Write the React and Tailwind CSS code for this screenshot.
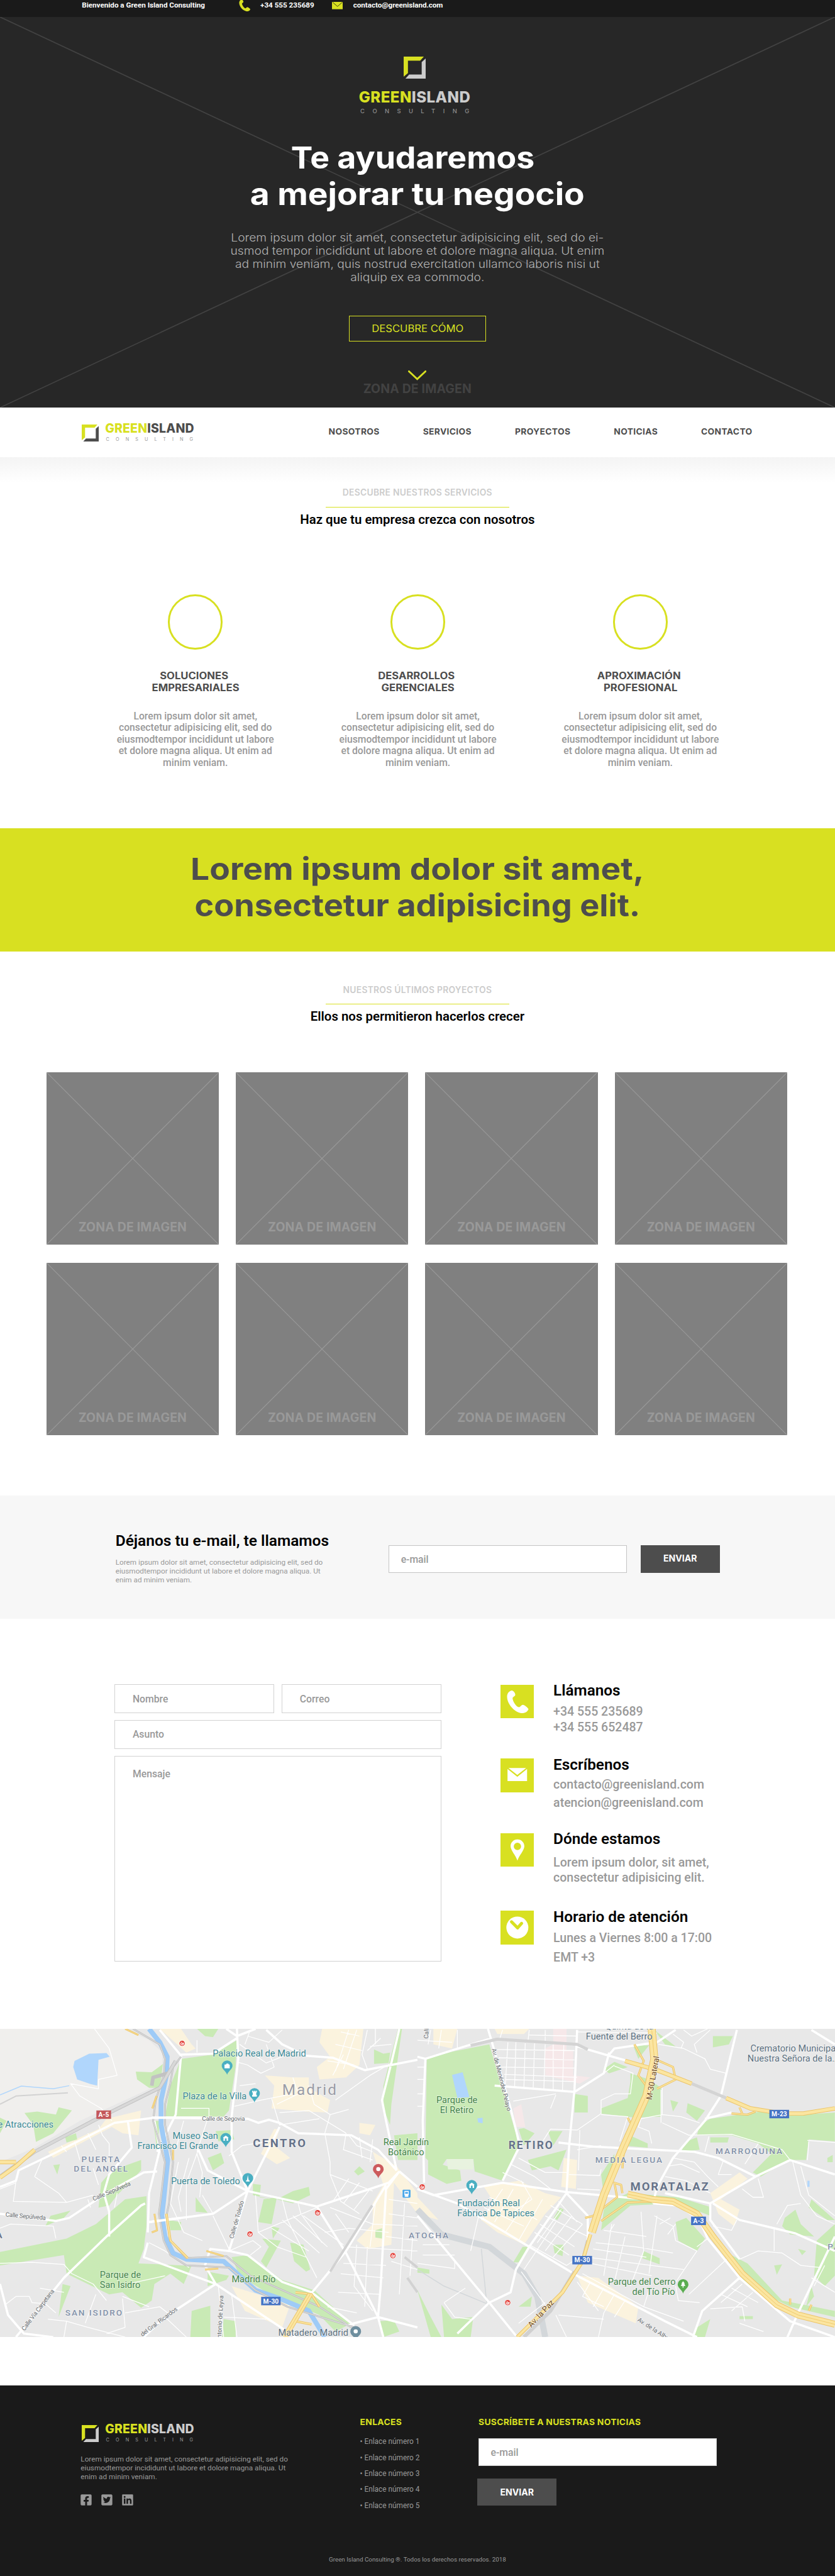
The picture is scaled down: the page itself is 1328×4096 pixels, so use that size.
import React from "react";
import { FaFacebookSquare, FaTwitterSquare, FaLinkedin } from "react-icons/fa";

const LIME = "#d8e021";

/* ---------- brand ---------- */

function LogoMark({ className, dark = false }) {
  return (
    <svg viewBox="0 0 36 36" className={className} aria-hidden="true">
      <path d="M0 0H33L27 6.7H7V27L0 33Z" fill={LIME} />
      <path d="M36 3V36H3L9 29.3H29.5V9Z" fill={dark ? "#4d4d4d" : "#cccccc"} />
    </svg>
  );
}

function LogoRow({ dark = false }) {
  return (
    <div className="flex gap-[10px]">
      <LogoMark dark={dark} className="mt-[3px] h-[28px] w-[28px]" />
      <div className="font-['Inter',sans-serif]">
        <div className={"text-[20px] leading-[20px] font-extrabold tracking-[0.21px] whitespace-nowrap " + (dark ? "text-[#4d4d4d]" : "text-[#cccccc]")}>
          <span className="text-[#d8e021]">GREEN</span>ISLAND
        </div>
        <div className="mt-[4.2px] text-[7.5px] leading-[8px] tracking-[10.4px] pl-[1.5px] whitespace-nowrap text-[#999999] -mr-[10px]">CONSULTING</div>
      </div>
    </div>
  );
}

/* ---------- icons drawn on a 55px square ---------- */

const PHONE =
  "M18.5 9.3C13 10.5 10.6 15 10.8 20C11.3 32 24 46.5 36.5 46.3C41 46 45 43 45.8 39.6C44 36.5 39.5 33 36.5 32.6C33.5 33 32.5 36.5 30 36.6C26 36 20 27 19.8 22C20 19.5 24 19 24.2 16.3C24 13 21.5 10 18.5 9.3Z";

function ContactIcon({ kind }) {
  return (
    <svg viewBox="0 0 55 55" className="h-[55px] w-[55px] shrink-0 bg-[#d8e021]" aria-hidden="true">
      {kind === "phone" && <path d={PHONE} fill="#fff" />}
      {kind === "mail" && (
        <g fill="#fff">
          <path d="M13 15.7H42L27.5 27Z" />
          <path d="M11.5 17.2L27.5 30L43.5 17.2V37H11.5Z" />
        </g>
      )}
      {kind === "pin" && (
        <path fill="#fff" fillRule="evenodd" d="M27.7 10C21.5 10 16.5 15 16.5 21C16.5 28 25 36 27.7 44.8C30.4 36 39 28 39 21C39 15 34 10 27.7 10ZM27.7 15.5A6 6 0 1 1 27.7 27.5A6 6 0 1 1 27.7 15.5Z" />
      )}
      {kind === "clock" && (
        <g>
          <circle cx="27.6" cy="27.7" r="18" fill="#fff" />
          <path d="M18 18.3L28 28.3L34.6 20.8" fill="none" stroke={LIME} strokeWidth="5" strokeLinecap="round" strokeLinejoin="round" />
        </g>
      )}
    </svg>
  );
}

/* ---------- header ---------- */

function TopBar() {
  return (
    <div className="flex h-[28px] bg-[#1a1a1a] pl-[134px] font-['Roboto',sans-serif] text-[12px] leading-[18px] font-bold text-white whitespace-nowrap">
      <div className="w-[257px]">Bienvenido a Green Island Consulting</div>
      <svg viewBox="10 8.5 36.5 38.5" className="h-[20px] w-[19px] -mt-px mr-[16px]" aria-hidden="true">
        <path d={PHONE} fill={LIME} />
      </svg>
      <div className="w-[117px]">+34 555 235689</div>
      <svg viewBox="0 0 18 12" className="mt-[3px] mr-[17px] h-[12px] w-[18px]" aria-hidden="true">
        <path d="M0 0H18V12H0Z" fill={LIME} />
        <path d="M1 0.5L9 7.5L17 0.5" fill="none" stroke="#3c3f10" strokeWidth="1" />
      </svg>
      <div className="tracking-[-0.05px]">contacto@greenisland.com</div>
    </div>
  );
}

function Hero() {
  return (
    <section className="relative h-[639px] bg-[#272727]">
      <svg className="absolute inset-0 h-full w-full" viewBox="0 0 1366 639" preserveAspectRatio="none" aria-hidden="true">
        <path d="M0 0L1366 639M1366 0L0 639" stroke="#424242" strokeWidth="1.8" />
      </svg>
      <div className="relative flex flex-col items-center pt-[65px] font-['Inter',sans-serif]">
        <div className="mr-[9px] flex flex-col items-center">
          <LogoMark className="h-[36px] w-[36px]" />
          <div className="mt-[17.7px] text-[24.8px] leading-[24px] font-extrabold tracking-[0.45px] text-[#cccccc]">
            <span className="text-[#d8e021]">GREEN</span>ISLAND
          </div>
          <div className="mt-[4.8px] -mr-[13px] text-[9.6px] leading-[12px] font-medium tracking-[12.8px] text-[#8f8f8f]">CONSULTING</div>
        </div>
        <h1 className="mt-[40.7px] text-center text-[50px] leading-[59.6px] font-bold text-white">
          <span className="mr-[15px] block scale-x-[1.065]">Te ayudaremos</span>
          <span className="block scale-x-[1.096]">a mejorar tu negocio</span>
        </h1>
        <p className="mt-[30px] scale-x-[1.094] text-center text-[18.1px] leading-[21.67px] font-light text-[#b3b3b3] whitespace-nowrap">
          Lorem ipsum dolor sit amet, consectetur adipisicing elit, sed do ei-<br />
          usmod tempor incididunt ut labore et dolore magna aliqua. Ut enim<br />
          ad minim veniam, quis nostrud exercitation ullamco laboris nisi ut<br />
          aliquip ex ea commodo.
        </p>
        <a className="mt-[52px] flex h-[43px] w-[225px] items-center justify-center border border-[#d8e021] pt-px text-[16px] leading-[20px] text-[#d8e021]">
          <span className="scale-x-[1.07]">DESCUBRE CÓMO</span>
        </a>
        <svg viewBox="0 0 30 16" className="mt-[47px] h-[16px] w-[30px]" aria-hidden="true">
          <path d="M1.5 1.5L15 14.2L28.5 1.5" fill="none" stroke={LIME} strokeWidth="3" strokeLinecap="round" />
        </svg>
        <div className="mt-[4.7px] text-[20px] leading-[20px] font-bold tracking-[0.17px] text-[#424242]">ZONA DE IMAGEN</div>
      </div>
    </section>
  );
}

function Nav() {
  return (
    <nav className="flex h-[81px] justify-between bg-white pt-[24px] pr-[135px] pl-[134px]">
      <LogoRow dark />
      <ul className="flex gap-[71px] pt-[6px] font-['Inter',sans-serif] text-[14.2px] leading-[20px] font-bold tracking-[0.36px] text-[#4d4d4d]">
        {["NOSOTROS", "SERVICIOS", "PROYECTOS", "NOTICIAS", "CONTACTO"].map((t) => (
          <li key={t}>{t}</li>
        ))}
      </ul>
    </nav>
  );
}

function SectionTitle({ kicker, children }) {
  return (
    <div className="flex flex-col items-center">
      <div className="font-['Inter',sans-serif] text-[14.2px] leading-[20px] font-semibold tracking-[0.3px] text-[#cccccc]">{kicker}</div>
      <div className="mt-[12.2px] h-[1.2px] w-[300px] bg-[#d8e021]" />
      <h2 className="mt-[8.6px] font-['Roboto',sans-serif] text-[21px] leading-[24px] font-semibold text-black">{children}</h2>
    </div>
  );
}

/* ---------- services ---------- */

const SERVICES = [
  ["SOLUCIONES", "EMPRESARIALES"],
  ["DESARROLLOS", "GERENCIALES"],
  ["APROXIMACIÓN", "PROFESIONAL"],
];

function Services() {
  return (
    <section className="h-[606.7px] bg-[linear-gradient(#f4f4f4,#ffffff_42px)] pt-[48.8px]">
      <SectionTitle kicker="DESCUBRE NUESTROS SERVICIOS">Haz que tu empresa crezca con nosotros</SectionTitle>
      <div className="mt-[110px] ml-[137.7px] grid w-[1092px] grid-cols-3">
        {SERVICES.map(([a, b]) => (
          <div key={a} className="flex flex-col items-center text-center">
            <div className="h-[90px] w-[90px] rounded-full border-[3.2px] border-[#d8e021]" />
            <h3 className="mt-[33.8px] font-['Inter',sans-serif] text-[15.8px] leading-[19.4px] font-bold text-[#4d4d4d]">
              <span className="mr-[5px] block scale-x-[1.085]">{a}</span>
              <span className="block scale-x-[1.085]">{b}</span>
            </h3>
            <p className="mt-[27px] font-['Roboto',sans-serif] text-[16.15px] leading-[19.1px] font-medium text-[#999999] whitespace-nowrap">
              Lorem ipsum dolor sit amet,<br />
              consectetur adipisicing elit, sed do<br />
              eiusmodtempor incididunt ut labore<br />
              et dolore magna aliqua. Ut enim ad<br />
              minim veniam.
            </p>
          </div>
        ))}
      </div>
    </section>
  );
}

function Quote() {
  return (
    <section className="h-[202.3px] bg-[#d8e021] pt-[37.4px] text-center font-['Inter',sans-serif] text-[50px] leading-[60px] font-bold text-[#4d4d4d]">
      <div className="scale-x-[1.097]">Lorem ipsum dolor sit amet,</div>
      <div className="scale-x-[1.076]">consectetur adipisicing elit.</div>
    </section>
  );
}

/* ---------- projects ---------- */

function Projects() {
  return (
    <section className="h-[890px] bg-white pt-[52.8px]">
      <SectionTitle kicker="NUESTROS ÚLTIMOS PROYECTOS">Ellos nos permitieron hacerlos crecer</SectionTitle>
      <div className="mt-[78.2px] ml-[76px] grid w-[1212px] grid-cols-4 gap-x-[28px] gap-y-[30px]">
        {Array.from({ length: 8 }, (_, i) => (
          <div key={i} className="relative flex h-[282px] items-end justify-center bg-[#808080] pb-[17.8px]">
            <svg className="absolute inset-0 h-full w-full" viewBox="0 0 282 282" aria-hidden="true">
              <path d="M0 0L282 282M282 0L0 282" stroke="#999999" strokeWidth="1.2" />
            </svg>
            <span className="relative font-['Inter',sans-serif] text-[20px] leading-[20px] font-bold tracking-[0.17px] text-[#999999]">ZONA DE IMAGEN</span>
          </div>
        ))}
      </div>
    </section>
  );
}

/* ---------- newsletter ---------- */

function Newsletter() {
  return (
    <section className="flex h-[201px] bg-[#f7f7f7] pl-[189px] font-['Roboto',sans-serif]">
      <div className="w-[447px] pt-[58.3px]">
        <h2 className="text-[25.2px] leading-[30px] font-semibold text-black">Déjanos tu e-mail, te llamamos</h2>
        <p className="mt-[12.7px] text-[12.1px] leading-[14.4px] text-[#999999]">
          Lorem ipsum dolor sit amet, consectetur adipisicing elit, sed do<br />
          eiusmodtempor incididunt ut labore et dolore magna aliqua. Ut<br />
          enim ad minim veniam.
        </p>
      </div>
      <div className="mt-[81.3px] flex h-[45px] w-[390px] items-center border border-[#c4c4c4] bg-white pt-[2px] pl-[19px] text-[16.2px] font-medium text-[#999999]">e-mail</div>
      <div className="mt-[81.3px] ml-[22px] flex h-[45px] w-[130px] items-center justify-center bg-[#4d4d4d] pb-[3px] font-['Inter',sans-serif] text-[14.5px] font-bold text-white">ENVIAR</div>
    </section>
  );
}

/* ---------- contact ---------- */

const CONTACTS = [
  { kind: "phone", title: "Llámanos", lines: ["+34 555 235689", "+34 555 652487"], box: "h-[121px]", body: "mt-[7.8px] leading-[26.3px]" },
  { kind: "mail", title: "Escríbenos", lines: ["contacto@greenisland.com", "atencion@greenisland.com"], box: "h-[122px]", body: "mt-[4.4px] leading-[30px]" },
  { kind: "pin", title: "Dónde estamos", lines: ["Lorem ipsum dolor, sit amet,", "consectetur adipisicing elit."], box: "h-[127px]", body: "mt-[13.4px] leading-[24px]" },
  { kind: "clock", title: "Horario de atención", lines: ["Lunes a Viernes 8:00 a 17:00", "EMT +3"], box: "h-[127px]", body: "mt-[5.4px] leading-[32px]" },
];

function Contact() {
  return (
    <section className="flex h-[671px] bg-white pt-[107px] pl-[187.5px] font-['Roboto',sans-serif]">
      <div className="flex w-[535px] flex-col gap-[11.5px] text-[16.2px] font-medium text-[#999999]">
        <div className="flex gap-[12px]">
          <div className="flex h-[47.5px] flex-1 items-center border border-[#d2d2d2] pt-px pl-[28.5px]">Nombre</div>
          <div className="flex h-[47.5px] flex-1 items-center border border-[#d2d2d2] pt-px pl-[28.5px]">Correo</div>
        </div>
        <div className="flex h-[47.5px] items-center border border-[#d2d2d2] pl-[28.5px]">Asunto</div>
        <div className="h-[336px] border border-[#d2d2d2] pt-[17.5px] pl-[28.5px] leading-[22px]">Mensaje</div>
      </div>
      <div className="ml-[96px] pt-px">
        {CONTACTS.map((c) => (
          <div key={c.kind} className={"flex " + c.box}>
            <ContactIcon kind={c.kind} />
            <div className="-mt-[5px] ml-[32px]">
              <h3 className="text-[25px] leading-[28px] font-semibold text-black">{c.title}</h3>
              <p className={"text-[20.1px] font-medium text-[#999999] whitespace-nowrap " + c.body}>
                {c.lines[0]}<br />{c.lines[1]}
              </p>
            </div>
          </div>
        ))}
      </div>
    </section>
  );
}

/* ---------- map ----------
   Each half of the city is drawn in its own 1568-unit grid. */

const KX = 0.4356;
const KY = 0.338;
const GRID = `scale(${KX} ${KY}) translate(0 -55)`;

const WEST = {
  pale: "M0 55H470L560 110L610 170V260L570 340L300 500L130 630L0 700Z",
  beige:
    "M600 55H680L720 130L735 150L700 170ZM1210 55H1365L1350 230L1300 290L1200 300L1190 240L1240 190L1200 120ZM995 280L1100 290H1160V340L1240 400L1230 460L1150 455L1020 440L1030 330ZM1030 540H1050L1030 620L1090 680L1040 710L980 660ZM180 650L370 540L400 490L530 450L520 570L460 560L420 530L200 680ZM1350 510L1410 520L1390 570L1350 560ZM1400 650L1490 720L1568 850V950L1480 800L1470 1100L1380 1120L1340 1080L1400 1000V900L1440 810ZM870 1300L1090 1390L1060 1500L920 1420ZM1130 350L1210 380L1200 440L1140 420Z",
  green:
    "M680 200L800 180L890 110L885 240L860 450L840 480H620L640 330ZM510 262L570 265L612 225L600 340H560L515 300ZM740 55H820L800 95L770 90ZM92 462L140 455L210 470L220 435L270 450L200 560L135 602L125 520ZM245 580L285 560L290 590L250 605ZM0 485L25 500L0 560ZM810 550L870 545L880 590L820 600ZM780 680L830 655L842 705L800 740ZM0 1135L250 1070L360 1000L470 880L550 865V1010L540 1120L520 1190L690 1200H720L690 1290L640 1240L580 1290L570 1370L530 1405L460 1330L410 1340L250 1240L240 1150L0 1200ZM380 800L420 740L530 690V740L440 860L410 910L370 920ZM235 1290L265 1300L220 1450ZM735 870L780 945L735 940ZM950 805L980 810L975 870L1020 880L950 860ZM990 880L1040 870L1020 1000L970 990ZM1100 840L1160 820L1165 860L1100 900L1040 880ZM985 1070L1055 1080L1000 1210L980 1180L1010 1110ZM1020 1010L1050 1020L1025 1070ZM1090 1090L1140 1100L1165 1220L1150 1230L1105 1180ZM870 1160L930 1150L1060 1270L1180 1320L1320 1480L1260 1520L1200 1440L1000 1330L900 1250ZM780 1230L860 1250L850 1270L780 1300ZM720 1420L790 1395V1547H715ZM840 1460L885 1470V1547H835ZM1405 155L1440 175L1465 170L1460 220L1405 225ZM1480 570L1568 560V690H1495ZM1350 720L1370 745L1345 765L1330 745ZM1495 55H1510L1470 420L1465 520L1440 440V330ZM1425 1470L1480 1465L1500 1520L1440 1547ZM1410 1030L1435 1020V1070L1410 1065ZM575 500H600L590 640ZM635 980L680 990V1030H640ZM200 715L225 710L215 760ZM190 960L265 935L240 970L170 1010Z",
  water: "M335 175L400 172L412 190L370 205L365 330L340 322L290 300L275 240L280 210Z",
  minor:
    "M355 55L410 150L440 280L370 300L370 345L265 320L300 380L380 440L420 500M370 520L385 570L410 610V700M330 560L360 640M280 600L300 690M230 620L250 650M60 790L50 890L250 895L350 860M130 770L160 680M130 770L220 850L250 895M0 830L60 800M350 730L370 810M330 880L340 920M0 1020L40 1000L120 1005L200 1010L210 1070M440 850L430 920M0 1190L120 1185L240 1195L270 1240L350 1290L400 1370M150 1310L240 1330M20 1390L60 1350H110L120 1380L170 1385L210 1430M180 1460L250 1470L240 1547M250 1470L330 1500L470 1547M360 1340L320 1480M460 1360L470 1500L400 1530M680 440H785V480M690 500L660 640M780 490L740 650M670 700L640 900L690 1040L760 1080M710 680L670 870L680 940M745 640L700 800L700 980M760 860L800 950M740 660L760 750L750 870M860 670L910 620L1050 590M890 215L930 230L980 270L1030 240L1000 130M740 110V170M900 130L1000 220L1080 180M930 90L1010 120L1060 60M940 60L920 130M900 330L960 320M880 430L980 400L1100 370M1020 390L1050 520L1200 490M1050 460L1160 450L1300 560M1100 290L1120 370L1040 420M1160 330L1180 420L1240 470L1220 560M1240 470L1310 445M1260 400L1390 280L1470 220M1290 180L1250 280M1280 70L1350 90M1260 130L1360 160M1230 210L1330 230M1310 60L1260 260M1340 60L1290 250M1380 60L1360 180L1380 250M1430 100L1380 160M1390 140L1470 130M1410 55V130M1300 560L1290 640L1400 690M1240 760L1400 840M1240 760L1280 890L1350 950M1310 780L1250 890M1350 800L1290 900M1390 830L1330 930M1310 570L1340 620L1400 650M1350 580L1360 680M1400 590L1390 700M1220 560L1240 700L1240 760M960 860L970 1040L1190 920M970 1040L1040 1110L1150 1160M1060 880L1080 980L1190 1260M1120 900L1130 950L1210 1090M1060 980L1200 1140M1100 960L1230 1110M1020 1020L1160 1130M1140 960L1290 1100M1240 920L1400 1000L1568 1010M1260 950L1310 1040M1220 1040L1310 1020L1460 1040M1300 1110L1568 1130M1290 1190L1450 1200M1280 1240L1440 1260M1270 1330L1430 1340M1340 1100L1330 1300L1400 1420M1380 1110L1370 1400M1410 900L1390 1110M1520 900L1500 1340M1550 1060L1540 1250M1470 1180L1568 1220M860 1130L950 1080L980 1110L940 1150M800 960L830 1040L860 1120M820 1300L840 1547M870 1340L890 1547M840 1450L1000 1460M620 1450L700 1547M560 1090L620 1130L710 1210M480 1290L620 1250M460 1350L560 1400M470 1430L600 1400L640 1440M1230 1400L1340 1430M1460 880L1568 900M1460 950L1568 970M1450 1060L1568 1080",
  major:
    "M0 820L60 790L70 740L200 660L430 510L580 485L930 490L970 510L1010 495L1050 510L1120 560L1320 570L1420 640L1490 740M600 60L680 185L660 470L590 650M680 180L800 175L890 100M1150 185L1250 195L1370 255L1568 205M890 55L895 200L870 480V650L930 840L860 1130M960 55L890 90L850 55M1000 60L1060 130L1150 185M930 840L1050 530M930 840L1190 915L1460 800L1500 745M745 640L780 740L930 840L800 950L560 990M1190 915L1300 1140L1420 1450L1440 1547M1490 740L1450 500L1435 400L1470 220L1500 55M1500 745L1568 820M1500 745L1450 830L1430 1300L1420 1450M1450 810L1300 1130L1160 1350M0 950L210 985L260 970L400 850L540 750L590 745M545 900L530 910L400 1060L240 1260L90 1500L60 1547M580 500L600 640L560 850L555 1040M555 1090L540 1160L810 1290L620 1450L540 1547M810 1290L1110 1547M930 1150L860 1130L790 1120L770 1200L810 1290M930 1150L1060 1280L1170 1330L1330 1490M480 500L495 630L410 760L390 850L410 940V1060M0 1290L30 1440L90 1530L200 1547M1420 1450L1300 1490M1420 1450L1568 1500",
};

const EAST = {
  pink: "M510 55H560V160H585V280L650 290L610 320L480 280V150L510 130ZM360 440L390 420L405 530H370Z",
  beige:
    "M60 55H150L130 150L60 130ZM290 55H420L400 80H300ZM250 820L380 790L480 850L540 870L480 950L400 1100L370 1080L300 1040L240 980L290 900ZM550 680L600 690L595 830L540 820ZM1100 850L1210 750L1240 780L1140 880L1210 930L1190 1010L1130 950ZM600 1250L680 1260L830 1400L820 1480L640 1380ZM0 870L80 980L0 950Z",
  green:
    "M35 200L130 165L270 130L300 260L370 560L380 640L320 790L215 745L210 685H110L80 740L30 680ZM40 690L160 740L165 790L110 805L40 760ZM590 370L640 380V460H590ZM800 270L870 300L915 340V480L820 485L690 465V440L790 390L800 310ZM700 250L740 215L790 240L720 270ZM810 135H870L830 200ZM890 60L970 140L930 130ZM1110 90H1185L1170 130L1110 145ZM950 400L980 410L960 455ZM1015 415L1080 450L1050 500L1010 460ZM1100 490L1320 450L1400 475L1568 460V600L1470 590L1460 690H1390L1290 770L1260 750L1330 660L1280 610L1180 570H1050L1060 520ZM1010 600L1050 580L1060 640L990 650ZM1100 580H1170L1165 605H1100ZM490 550H545L510 620ZM415 690L560 640L530 740L500 720L430 740ZM400 535L440 560L400 620L380 540ZM690 760L740 660V720L700 860ZM790 850L980 870L1095 915L1100 960L980 900L800 910L690 1030L700 930L730 890ZM970 990L1010 970L1080 1070L1050 1130L980 1080ZM850 1130L910 1165V1195L845 1165ZM510 1100H550L545 1155L515 1140ZM535 920L550 930L525 980L512 970ZM395 1110H415L380 1185H360ZM1150 1130L1240 1190L1370 1370L1568 1420V1450L1400 1400L1240 1300ZM1380 970L1420 930L1440 1000L1490 1060L1400 1050L1370 1010ZM1568 1000L1500 1080L1490 1250L1530 1300L1568 1250ZM1430 1120L1460 1130L1445 1150ZM1480 1300L1490 1350L1460 1400ZM0 1320L50 1450L90 1547H50ZM90 1390L130 1460L210 1450L200 1547H100ZM1050 1500L1100 1460L1080 1547H1030ZM380 1400L430 1350L425 1400ZM1340 1200L1370 1195L1350 1245ZM1480 880L1568 980L1540 980L1470 920ZM0 1210L45 1220V1240L0 1235ZM1540 680L1560 665V700H1540ZM780 560L865 610V630L770 620ZM1210 1445H1260V1460H1210Z",
  pale: "M110 685H210V735H115Z",
  water: "M130 278L170 265L195 385L150 390ZM225 488L245 485V512L228 508ZM1465 790H1473V820H1465Z",
  minor:
    "M340 120L330 330M370 120L365 335M405 125L400 340M440 125L435 340M480 130L475 345M510 130V350M550 130L545 350M300 155L590 160M305 195L590 205M315 240L590 245M325 275L600 290M330 300L590 310M320 60L310 100M420 60L415 120M480 60V125M600 90L420 85M600 70L900 75M360 405L520 370M520 375L500 440M500 540L600 545L690 465L690 400L740 370M500 540L470 600M610 545L605 740M600 640L690 620M570 760L685 765L690 735M380 680L480 750L560 750M350 710L440 770L500 830M320 750L400 800M600 830L685 835M690 470L790 480L760 600M740 235L810 270L800 370L740 370M700 270L740 230M905 130L1000 150L1080 200L1100 250L1160 270M960 80L1000 120L990 150M1000 60L1030 90L1090 55M1100 60L1040 130L1050 170M920 340V470L840 490L830 530L870 550L880 610M920 470L990 480L1060 510M915 350V510M920 510L1020 570L1180 565L1370 640L1400 690M1095 575L1080 650M1280 610L1230 710M940 720L990 710L1060 750M960 680L1040 700L1090 770L1130 820M930 770L1010 790L1100 850M1150 690L1130 760L1180 760M1465 595L1570 605M1470 600L1465 690M1410 700L1440 860L1500 960L1568 1000M1440 720L1470 860L1568 960M1280 780L1300 870L1260 870L1220 830M1340 1020V1130M1440 900L1390 910L1350 1000M1210 1170L1280 1130L1370 1140L1440 1200L1510 1210M1200 980L1180 1030L1110 1010M480 960L640 1060M500 910L620 1000M530 890L600 990M460 1000L590 1110M440 1040L570 1150M420 1100L560 1200M540 930L450 1090M580 960L480 1130M620 1000L510 1160M560 1200L630 1140M390 790L430 880L350 950M320 830L240 980M360 830L290 990M420 870L330 1040M470 880L380 1080M270 870L400 940L450 980M250 920L400 1010M230 960L200 1130M640 1160L1000 1220M660 1120L860 1160M650 1190L880 1250M670 1090L820 1110L960 1140M700 1030L860 1060M730 1000L700 1250M780 1060L740 1280M840 940L850 1130L800 1300M900 960L870 1240M740 1000L720 1040M890 960L960 1010L970 1080L1050 1130M910 1000L950 970M940 1050L970 1000M1050 1130L960 1300M1170 1160L1020 1340M1090 1070L1050 1110M600 1280L680 1420M650 1280L620 1350L700 1400M700 1310L660 1400M740 1340L700 1430M780 1370L740 1450M620 1240L850 1400L1000 1470M870 1320L850 1400M970 1300L980 1370L1060 1380M400 1220L520 990M390 1230L480 1390M20 1100L120 1100M20 1150L140 1150M0 1190L140 1215V1180M100 1380L140 1450L200 1460M100 1380L180 1310M380 1480L480 1380M520 1440L560 1547M530 1440L700 1460M700 1430L680 1547M1100 1410L1220 1400M1220 1400L1230 1470M1140 1340L1240 1400M1180 1310L1280 1380M1220 1290L1140 1380M1260 1330L1180 1420M1480 1260L1568 1330M1530 1200L1490 1300M1210 1480L1300 1520M0 240H30M0 300H25M0 370H25M0 430H25M50 60L40 130M90 60L80 150M0 110L130 120M150 60V150",
  major:
    "M0 190L30 200L140 155L280 100M30 200L20 500L25 800M265 55L280 120L350 440L385 620L320 790M600 60L590 350L570 620L560 850M290 330L590 360L700 270L720 170M600 140L720 185L870 240M720 180L740 150L900 120L970 60M0 830L60 860L320 800L560 845L900 885M0 830L150 900L420 1110L600 1250L930 1470L1050 1547M560 850L420 1110L370 1220L350 1330L270 1380L150 1530M270 1380L370 1540M0 960L270 1380M530 605L660 625L1040 650L1130 680L1270 770L1400 690L1568 760M1270 770L1100 900M1200 60L1140 380L1080 500L960 680L900 820L885 900M1180 460L1080 490M885 900L980 910L1060 980L1090 1070L1210 1260L1400 1470L1568 1547M1100 900L930 850M1100 900V980L1210 1170M1110 900L1210 980L1340 1020L1420 1045L1568 1130M1568 1060L1430 1430L1390 1547M1210 1260L1070 1420L1035 1547M560 850L640 960V1080M1480 60L1568 130",
};

const TEAL = "#3a8996";
const PARK = "#44854a";
const ZONE = "#8190a8";
const TOWN = "#66738a";
const SLATE = "#5c7080";
const STREET = "#666a6e";
const W = 0;
const E = 683;

/* half, text, x, baseline, size, colour, tracking, rotation, weight */
const LABELS = [
  [W, "Palacio Real de Madrid", 799, 190, 15, TEAL],
  [W, "Plaza de la Villa", 686, 395, 15, TEAL],
  [W, "Museo San", 648, 588, 15, TEAL],
  [W, "Francisco El Grande", 516, 637, 15, TEAL],
  [W, "Puerta de Toledo", 642, 808, 15, TEAL],
  [W, "e Atracciones", -8, 533, 15, TEAL],
  [W, "Madrid", 1060, 375, 25, "#9a9ca6", 2.1, 0, 400],
  [W, "CENTRO", 950, 628, 19, TOWN, 2.6, 0, 700],
  [W, "PUERTA", 306, 701, 14, ZONE, 2.2, 0, 500],
  [W, "DEL ANGEL", 277, 746, 14, ZONE, 2, 0, 500],
  [W, "SAN ISIDRO", 245, 1443, 14, ZONE, 2, 0, 500],
  [W, "Calle de Segovia", 759, 500, 10, STREET, -0.2],
  [W, "Calle Sepúlveda", 352, 888, 10, STREET, -0.3, -23],
  [W, "Calle Sepúlveda", 20, 963, 10, STREET, -0.3, 5],
  [W, "Calle de Toledo", 876, 1072, 10, STREET, -0.3, -74],
  [W, "Calle Vía Carpetana", 92, 1518, 10, STREET, -0.3, -53],
  [W, "del Gral. Ricardos", 535, 1545, 10, STREET, -0.3, -37],
  [W, "Antonio de Leyva", 830, 1570, 10, STREET, 0, -87],
  [W, "Parque de", 375, 1260, 15, PARK],
  [W, "San Isidro", 375, 1308, 15, PARK],
  [W, "Madrid Río", 870, 1281, 15, PARK],
  [W, "Matadero Madrid", 1045, 1541, 15, SLATE],
  [W, "Real Jardín", 1440, 619, 15, PARK],
  [W, "Botánico", 1457, 668, 15, PARK],
  [W, "ATOCHA", 1535, 1070, 14, ZONE, 2, 0, 500],
  [W, "A", -13, 1070, 14, TOWN, 0, 0, 700],
  [E, "Quinta de la", 705, 57, 15, SLATE],
  [E, "Fuente del Berro", 633, 107, 15, SLATE],
  [E, "Crematorio Municipal", 1251, 165, 15, SLATE],
  [E, "Nuestra Señora de la…", 1240, 213, 15, SLATE],
  [E, "Parque de", 71, 415, 15, PARK],
  [E, "El Retiro", 85, 463, 15, PARK],
  [E, "RETIRO", 342, 635, 18, TOWN, 2, 0, 700],
  [E, "MEDIA LEGUA", 668, 704, 14, ZONE, 2, 0, 500],
  [E, "MORATALAZ", 800, 836, 19, TOWN, 2, 0, 700],
  [E, "MARROQUINA", 1120, 662, 14, ZONE, 2, 0, 500],
  [E, "Fundación Real", 150, 913, 15, TEAL],
  [E, "Fábrica De Tapices", 150, 962, 15, TEAL],
  [E, "Parque del Cerro", 715, 1295, 15, PARK],
  [E, "del Tío Pío", 807, 1343, 15, PARK],
  [E, "PA", 1541, 1123, 14, ZONE, 2, 0, 500],
  [E, "M-30 Lateral", 880, 400, 13, "#6f4a22", 0, -80],
  [E, "Av. la Paz", 428, 1502, 13, "#6f4a22", 0, -47],
  [E, "Av. de Menéndez Pelayo", 279, 152, 10, STREET, -0.1, 76],
  [E, "Av. de la Albufera", 825, 1468, 10, STREET, 0, 33],
  [E, "Calle", 40, 103, 10, STREET, 0, -86],
];

const BADGES = [
  [W, "A-5", 362, 450, 55, "#c4585b"],
  [W, "M-30", 981, 1352, 73, "#4573c4"],
  [E, "M-23", 1322, 447, 74, "#4573c4"],
  [E, "A-3", 1028, 964, 56, "#4573c4"],
  [E, "M-30", 582, 1154, 74, "#4573c4"],
];

const PINS = [
  [W, 853, 236, "#4aafc2", "camera"],
  [W, 956, 370, "#4aafc2", "tower"],
  [W, 848, 587, "#4aafc2", "house"],
  [W, 931, 781, "#4aafc2", "spire"],
  [W, 1336, 1522, "#6f8f9f", "dot"],
  [W, 1421, 737, "#cc5b5d", "dot"],
  [E, 204, 815, "#4aafc2", "house"],
  [E, 998, 1295, "#5aad50", "tree"],
];

const GLYPHS = {
  camera: "M-4.5 -2.5H-2L-1 -4H2L3 -2.5H4.5V4H-4.5Z",
  tower: "M-4 -5H-2V-3.5H-1V-5H1V-3.5H2V-5H4V-2H3V2H4V5H-4V2H-3V-2H-4Z",
  house: "M0 -5L5 -1.5H4V4H1.5V0H-1.5V4H-4V-1.5H-5Z",
  spire: "M0 -6L1.5 3H3V5H-3V3H-1.5Z",
  tree: "M0 -6L3 -2H1.8L4 2H0.8V5H-0.8V2H-4L-1.8 -2H-3Z",
};

const METRO = [[W, 684, 125], [W, 1193, 945], [W, 939, 1048], [W, 1476, 1152], [E, 18, 820], [E, 339, 1380]];

const at = (half, x, y) => `translate(${(half + x * KX).toFixed(1)} ${((y - 55) * KY).toFixed(1)})`;

function Road({ d, color, width }) {
  return <path d={d} fill="none" stroke={color} strokeWidth={width} strokeLinejoin="round" vectorEffect="non-scaling-stroke" />;
}

function Motorway({ d, width }) {
  return (
    <>
      <Road d={d} color="#ecc467" width={width} />
      <Road d={d} color="#fbe5a0" width={width - 2} />
      {width > 8 && <Road d={d} color="#efca70" width={1} />}
    </>
  );
}

function CityMap() {
  return (
    <svg viewBox="0 0 1366 504" className="block h-[504px] w-[1366px] overflow-hidden bg-[#e8e8e8]" role="img">
      <g transform={GRID}>
        <path d={WEST.pale} fill="#f0efed" />
        <path d={WEST.beige} fill="#fbf3de" />
        <path d={WEST.green} fill="#c9eab5" />
        <path d={WEST.water} fill="#b0d6fc" />
        <Road d="M0 375L80 332L200 345L260 330" color="#b0d6fc" width={1.5} />
        <Road d="M0 420L60 380L255 365" color="#d2d2d2" width={2} />
        <Road d={WEST.minor} color="#ffffff" width={1.3} />
        <Road d={WEST.major} color="#ffffff" width={3.6} />
        <Road d="M560 55L600 120L628 190L625 280L605 400V520L630 690L615 880L608 960L620 1060L650 1140L700 1170L840 1180L900 1250L960 1320L1050 1360L1160 1420L1220 1547" color="#9ecbf7" width={8} />
        <Road d="M500 55L600 130L620 200L615 280L585 400L575 500L620 700L605 870L597 950L615 1080L640 1150L700 1200L860 1210L960 1320L1080 1400L1330 1500M680 190L650 240L640 320L620 420V520L650 700L635 900L625 960L640 1080L700 1165L850 1155L940 1250L1200 1400L1320 1500" color="#bcbcbc" width={3} />
        <Road d="M500 55L600 130L620 200L615 280L585 400L575 500L620 700L605 870L597 950L615 1080L640 1150L700 1200L860 1210L960 1320L1080 1400L1330 1500M680 190L650 240L640 320L620 420V520L650 700L635 900L625 960L640 1080L700 1165L850 1155L940 1250L1200 1400L1320 1500" color="#d8d8d8" width={1.6} />
        <Road d="M570 485H760M560 990L680 970" color="#ffffff" width={4} />
        <Road d="M0 770L130 650L350 500L600 340L660 210M570 330L575 290L630 270" color="#c2c2c2" width={6} />
        <Road d="M0 770L130 650L350 500L600 340L660 210" color="#d8d8d8" width={4} />
        <Road d="M1398 910L1240 1230M1520 1160L1568 1210M1530 1260L1568 1330" color="#d2d2d2" width={4} />
        <Motorway d="M0 775L60 720L130 640M0 700H60" width={7} />
        <Motorway d="M470 55L520 85M588 380L572 440M650 640V690M580 950L590 1030L570 1040M775 1130L840 1155M770 1220L820 1215" width={3} />
        <Motorway d="M625 950L640 1080L705 1165M1110 1330L1170 1340L1200 1400M1110 1470L1170 1485" width={4} />
        <Motorway d="M1165 1340L1070 1547" width={9} />
      </g>
      <g transform={`translate(${E} 0) ${GRID}`}>
        <path d={EAST.pink} fill="#f6e8e9" />
        <path d={EAST.beige} fill="#fbf3de" />
        <path d={EAST.green} fill="#c9eab5" />
        <path d={EAST.pale} fill="#e8f3df" />
        <path d={EAST.water} fill="#b0d6fc" />
        <Road d="M0 930L90 1050L270 1110L400 1240L450 1350L480 1547" color="#d3d7da" width={10} />
        <Road d="M0 1220L100 1300L270 1390M240 1120L260 1380" color="#d3d7da" width={1.5} />
        <Road d={EAST.minor} color="#ffffff" width={1.3} />
        <Road d={EAST.major} color="#ffffff" width={3.6} />
        <Road d="M200 135L300 105L600 130L640 155M1030 320L1160 390" color="#d4d4d4" width={5} />
        <Road d="M590 1230L500 1420L400 1547M640 1080L620 1180" color="#d0d0d0" width={6} />
        <Motorway d="M815 130L850 210L830 280L870 350M890 200L960 240L970 300L900 345M910 890L790 895L690 985M630 970L660 960L750 870L740 800L765 810L770 850M1180 465L1240 470L1270 455M1210 435L1220 465M1400 1390V1360M1470 1420L1480 1390M770 730L775 650M800 510L790 485" width={3.5} />
        <Motorway d="M780 210L900 255L1030 320M1160 390L1250 440L1370 465H1450L1568 440" width={7} />
        <Motorway d="M650 1050L620 1180L545 1330L375 1547" width={6} />
        <Motorway d="M790 855L880 880L960 890L1050 950L1110 1060L1220 1240L1350 1390L1430 1440L1568 1485" width={11} />
        <Motorway d="M880 55L890 200L860 380L770 640L700 860L655 1040" width={13} />
      </g>
      {METRO.map(([h, x, y]) => (
        <g key={x} transform={at(h, x, y)}>
          <circle r="5" fill="#fff" />
          <circle r="4.4" fill="#e2413a" />
          <path d="M-1 -2.4L0 1L2.4 -0.6A2.5 2.5 0 1 1 -2.2 -0.8" fill="none" stroke="#fff" strokeWidth="1.1" />
        </g>
      ))}
      <g transform={at(W, 1527, 853)}>
        <rect x="-6.5" y="-6.5" width="13" height="13" rx="1.5" fill="#4aa7ea" />
        <path d="M-3.5 -4.5H3.5V3H-3.5ZM-3.5 5L-2 3H2L3.5 5" fill="#fff" />
        <path d="M-2.3 -2.8H2.3V0H-2.3Z" fill="#4aa7ea" />
      </g>
      {PINS.map(([h, x, y, c, g]) => (
        <g key={x} transform={at(h, x, y)}>
          <path d="M0 14C-1.5 8 -8.8 5 -8.8 -0.8A8.8 8.8 0 0 1 8.8 -0.8C8.8 5 1.5 8 0 14Z" fill={c} />
          {g === "dot" ? <circle cy="-1" r="3.4" fill="#fff" /> : <path d={GLYPHS[g]} fill="#fff" transform="translate(0 -0.5) scale(0.95)" />}
        </g>
      ))}
      {BADGES.map(([h, t, x, y, w, c]) => (
        <g key={t + x} transform={at(h, x, y)}>
          <rect width={w * KX} height="13.8" fill={c} />
          <text x={(w * KX) / 2} y="10.7" textAnchor="middle" fill="#fff" fontSize="10.5" fontWeight="700" fontFamily="Roboto, sans-serif">{t}</text>
        </g>
      ))}
      {LABELS.map(([h, t, x, y, size, color, ls = 0, rot = 0, weight = 400], i) => (
        <text key={i} transform={at(h, x, y) + ` rotate(${rot})`} fontSize={size} fill={color} fontWeight={weight} letterSpacing={ls} fontFamily="Roboto, sans-serif" stroke="#ffffff" strokeOpacity="0.6" strokeWidth="1.6" paintOrder="stroke">{t}</text>
      ))}
    </svg>
  );
}

/* ---------- footer ---------- */

function Footer() {
  return (
    <footer className="mt-[79px] h-[312px] bg-[#1a1a1a] font-['Roboto',sans-serif] text-[#999999]">
      <div className="flex h-[278px] pl-[132px]">
        <div className="w-[457px] pt-[62px]">
          <div className="pl-[2px]"><LogoRow /></div>
          <p className="mt-[19.8px] text-[12.1px] leading-[14.4px]">
            Lorem ipsum dolor sit amet, consectetur adipisicing elit, sed do<br />
            eiusmodtempor incididunt ut labore et dolore magna aliqua. Ut<br />
            enim ad minim veniam.
          </p>
          <div className="-ml-px mt-[19.8px] flex gap-[13.5px] text-[20.5px]">
            <FaFacebookSquare /><FaTwitterSquare /><FaLinkedin />
          </div>
        </div>
        <div className="w-[194px] pt-[50.3px]">
          <h4 className="font-['Inter',sans-serif] text-[14.2px] leading-[20px] font-bold tracking-[0.4px] text-[#d8e021]">ENLACES</h4>
          <ul className="mt-[9.8px] text-[12.2px] leading-[26px]">
            {[1, 2, 3, 4, 5].map((n) => (
              <li key={n}>• Enlace número {n}</li>
            ))}
          </ul>
        </div>
        <div className="pt-[50.3px]">
          <h4 className="font-['Inter',sans-serif] text-[14.2px] leading-[20px] font-bold tracking-[0.32px] text-[#d8e021] whitespace-nowrap">SUSCRÍBETE A NUESTRAS NOTICIAS</h4>
          <div className="mt-[16.7px] flex h-[45px] w-[390px] items-center border border-[#cccccc] bg-white pt-[2px] pl-[19px] text-[16.2px] font-medium">e-mail</div>
          <div className="-ml-[2px] mt-[21px] flex h-[44px] w-[130px] items-center justify-center bg-[#4d4d4d] pb-px font-['Inter',sans-serif] text-[14.5px] font-bold text-white">ENVIAR</div>
        </div>
      </div>
      <div className="text-center text-[10.1px] leading-[14px]">Green Island Consulting ®. Todos los derechos reservados. 2018</div>
    </footer>
  );
}

export default function App() {
  return (
    <div className="h-[4214px] w-[1366px] overflow-hidden bg-white [zoom:0.972]">
      <TopBar />
      <Hero />
      <Nav />
      <Services />
      <Quote />
      <Projects />
      <Newsletter />
      <Contact />
      <CityMap />
      <Footer />
    </div>
  );
}
